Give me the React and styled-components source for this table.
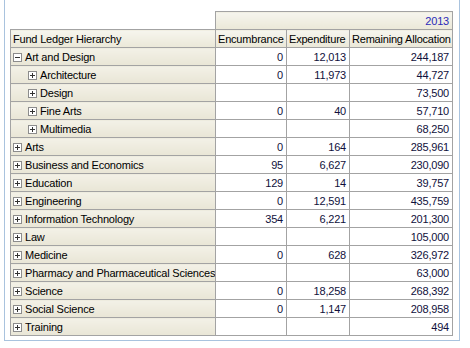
import React from 'react';
import styled, { createGlobalStyle } from 'styled-components';

const rows = [
  { name: 'Art and Design', level: 0, open: true, enc: '0', exp: '12,013', rem: '244,187' },
  { name: 'Architecture', level: 1, enc: '0', exp: '11,973', rem: '44,727' },
  { name: 'Design', level: 1, enc: '', exp: '', rem: '73,500' },
  { name: 'Fine Arts', level: 1, enc: '0', exp: '40', rem: '57,710' },
  { name: 'Multimedia', level: 1, enc: '', exp: '', rem: '68,250' },
  { name: 'Arts', level: 0, enc: '0', exp: '164', rem: '285,961' },
  { name: 'Business and Economics', level: 0, enc: '95', exp: '6,627', rem: '230,090' },
  { name: 'Education', level: 0, enc: '129', exp: '14', rem: '39,757' },
  { name: 'Engineering', level: 0, enc: '0', exp: '12,591', rem: '435,759' },
  { name: 'Information Technology', level: 0, enc: '354', exp: '6,221', rem: '201,300' },
  { name: 'Law', level: 0, enc: '', exp: '', rem: '105,000' },
  { name: 'Medicine', level: 0, enc: '0', exp: '628', rem: '326,972' },
  { name: 'Pharmacy and Pharmaceutical Sciences', level: 0, enc: '', exp: '', rem: '63,000' },
  { name: 'Science', level: 0, enc: '0', exp: '18,258', rem: '268,392' },
  { name: 'Social Science', level: 0, enc: '0', exp: '1,147', rem: '208,958' },
  { name: 'Training', level: 0, enc: '', exp: '', rem: '494' },
];

const Toggle = ({ open }) => (
  <ToggleIcon width="9" height="9" viewBox="0 0 9 9">
    <rect x="0.5" y="0.5" width="8" height="8" fill="#fff" stroke="#8c8c8c" />
    <path d="M2 4.5h5" stroke="#333" />
    {!open && <path d="M4.5 2v5" stroke="#333" />}
  </ToggleIcon>
);

const App = () => {
  return (
    <>
      <GlobalStyle />
      <Frame>
        <Table>
          <colgroup>
            <col style={{ width: 205 }} />
            <col style={{ width: 71 }} />
            <col style={{ width: 63 }} />
            <col style={{ width: 103 }} />
          </colgroup>
          <thead>
            <tr>
              <Blank />
              <YearCell colSpan={3}>2013</YearCell>
            </tr>
            <tr>
              <HeadCell>Fund Ledger Hierarchy</HeadCell>
              <HeadCell>Encumbrance</HeadCell>
              <HeadCell>Expenditure</HeadCell>
              <HeadCell>Remaining Allocation</HeadCell>
            </tr>
          </thead>
          <tbody>
            {rows.map((item, id) => {
              return (
                <tr key={id}>
                  <RowHead level={item.level}>
                    <Toggle open={item.open} />
                    {item.name}
                  </RowHead>
                  <Num>{item.enc}</Num>
                  <Num>{item.exp}</Num>
                  <Num>{item.rem}</Num>
                </tr>
              );
            })}
          </tbody>
        </Table>
      </Frame>
    </>
  );
};

export default App;

const GlobalStyle = createGlobalStyle`
  body {
    margin: 0;
    background: #fff;
    font-family: "Liberation Sans", Arial, sans-serif;
  }
`;

const Frame = styled.div`
  margin-left: 4px;
  width: 456px;
  border: 1px solid #a9c3de;
  border-top: none;
  padding: 11px 0 4px 5px;
  box-sizing: border-box;
`;

const Table = styled.table`
  border-collapse: collapse;
  table-layout: fixed;
  width: 443px;
  font-size: 11px;
  letter-spacing: -0.2px;
`;

const Cell = styled.td`
  height: 18px;
  padding: 0 3px;
  border: 1px solid #a3a3a3;
  white-space: nowrap;
  overflow: hidden;
  box-sizing: border-box;
  line-height: 16px;
`;

const Blank = styled.td`
  border: none;
  padding: 0;
`;

const YearCell = styled(Cell)`
  text-align: right;
  color: #2b2bb8;
  background: linear-gradient(#f6f5ee, #ebe8d8);
`;

const HeadCell = styled(Cell).attrs({ as: 'th' })`
  font-weight: normal;
  text-align: left;
  padding: 0 2px;
  color: #000;
  background: linear-gradient(#f6f5ee, #ebe8d8);
`;

const RowHead = styled(Cell).attrs({ as: 'th' })`
  font-weight: normal;
  text-align: left;
  color: #000;
  padding-left: ${(p) => (p.level ? 17 : 2)}px;
  background: linear-gradient(#f3f1e7, #e9e6d6);
`;

const ToggleIcon = styled.svg`
  display: inline-block;
  vertical-align: -1px;
  margin-right: 3px;
`;

const Num = styled(Cell)`
  text-align: right;
  color: #10103c;
  background: #fff;
`;
